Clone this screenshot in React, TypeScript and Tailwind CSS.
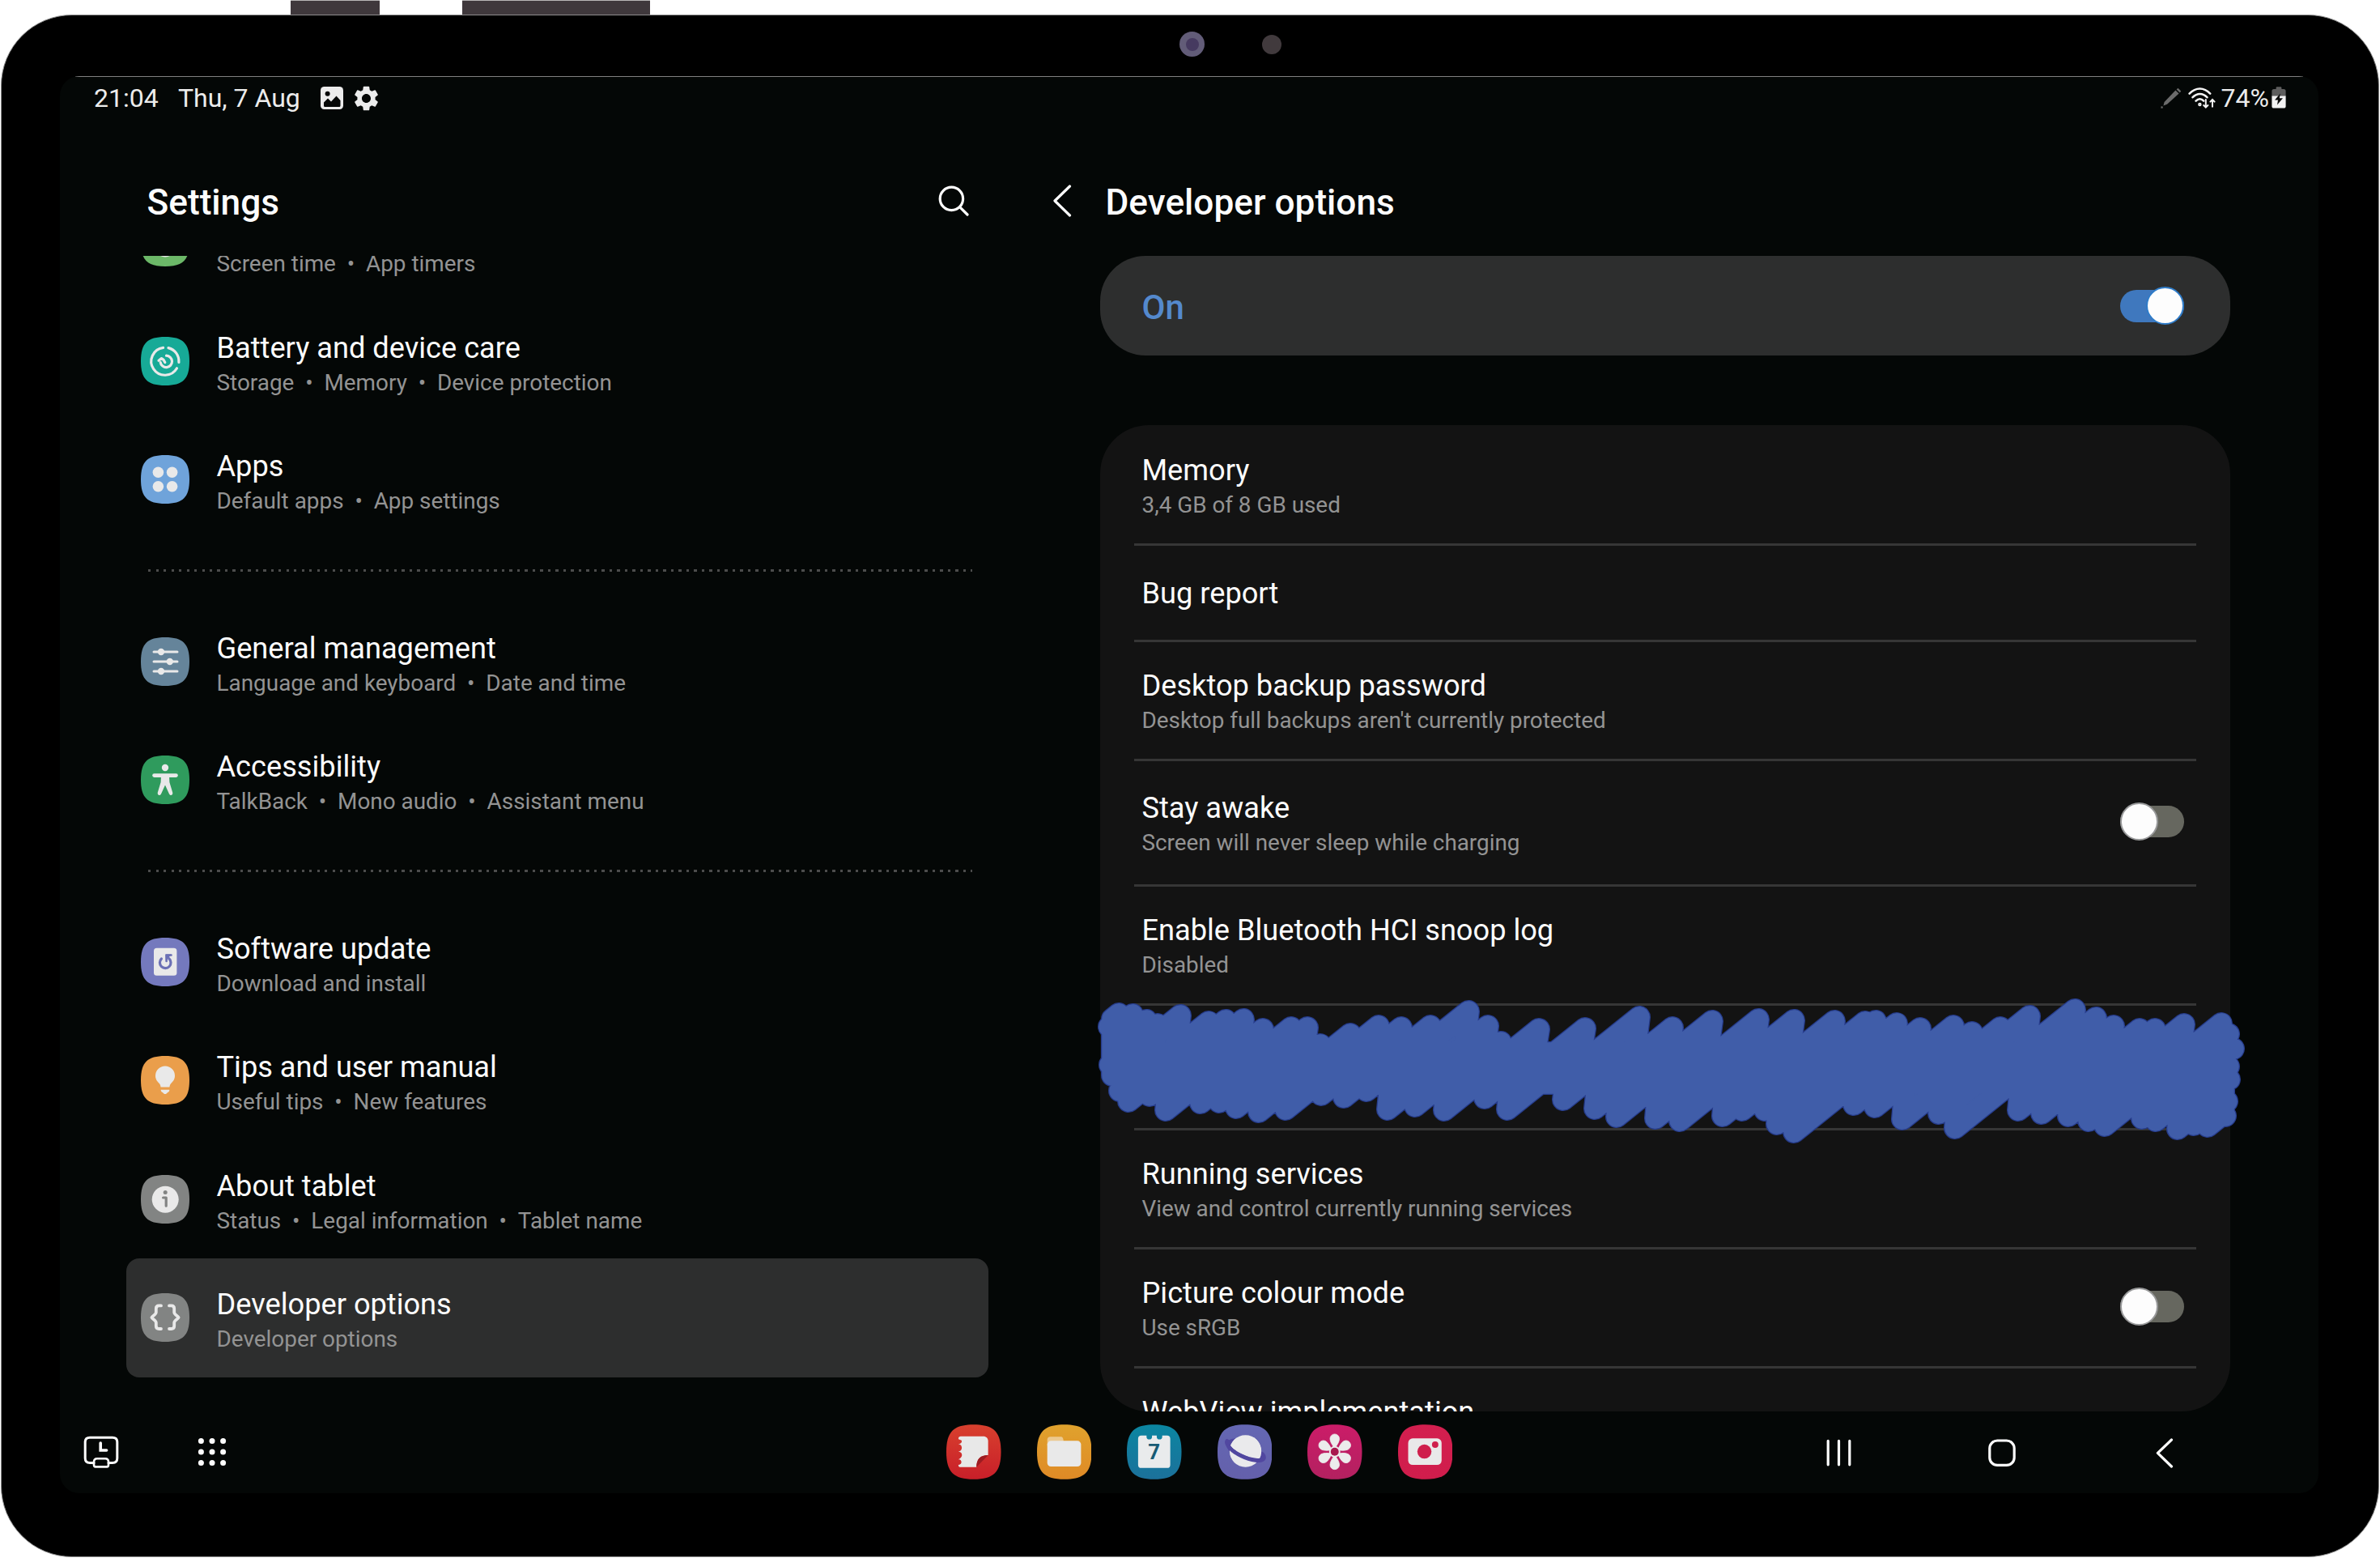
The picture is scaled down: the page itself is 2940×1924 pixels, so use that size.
import type { ReactNode } from "react";
import { MdSettings } from "react-icons/md";

const SQUIRCLE = "M30 0C52 0 60 8 60 30C60 52 52 60 30 60C8 60 0 52 0 30C0 8 8 0 30 0Z";

function ListIcon({ color, children }: { color: string; children?: ReactNode }) {
  return (
    <svg className="h-[60px] w-[60px] shrink-0" viewBox="0 0 60 60" fill="none" strokeLinecap="round" strokeLinejoin="round">
      <path d={SQUIRCLE} fill={color} />
      {children}
    </svg>
  );
}

const INK = "#e9e9e9";

const wellbeingIcon = (
  <ListIcon color="#6cb868">
    <circle cx="30" cy="36" r="12.4" fill={INK} />
  </ListIcon>
);
const batteryIcon = (
  <ListIcon color="#17aa97">
    <path d="M34 13.6A17 17 0 0 1 46.9 31.5M44.5 38.8A17 17 0 1 1 27.6 13.4" stroke={INK} strokeWidth="3.2" />
    <path d="M31.5 23.2A7.2 7.2 0 1 1 24.2 31.5" stroke={INK} strokeWidth="3.2" />
    <path d="M22 29.2L25.5 26.6L28 28.4L29.8 31.5" stroke={INK} strokeWidth="3.2" />
  </ListIcon>
);
const appsIcon = (
  <ListIcon color="#6fa3da">
    <circle cx="21.4" cy="21.2" r="6.8" fill={INK} />
    <circle cx="38.6" cy="21.2" r="6.8" fill={INK} />
    <circle cx="21.4" cy="38.8" r="6.8" fill={INK} />
    <circle cx="38.6" cy="38.8" r="6.8" fill={INK} />
  </ListIcon>
);
const slidersIcon = (
  <ListIcon color="#65849a">
    <path d="M16 18H45M16 30H45M16 42H45" stroke={INK} strokeWidth="3" />
    <circle cx="25" cy="18" r="4.2" fill={INK} />
    <circle cx="35.8" cy="30" r="4.2" fill={INK} />
    <circle cx="25" cy="42" r="4.2" fill={INK} />
  </ListIcon>
);
const accessibilityIcon = (
  <ListIcon color="#2f9b5d">
    <circle cx="30" cy="15" r="4.2" fill={INK} />
    <path d="M16.5 24.6H43.5" stroke={INK} strokeWidth="4.6" />
    <path d="M25 24.5H35L35.4 33L39.3 46C39.6 49.4 36 50 34.9 47.2L30 36.5L25.1 47.2C24 50 20.4 49.4 20.7 46L24.6 33Z" fill={INK} />
  </ListIcon>
);
const updateIcon = (
  <ListIcon color="#7479bd">
    <rect x="16" y="12.8" width="28.4" height="34" rx="3.6" fill={INK} />
    <path d="M25.4 26A6.8 6.8 0 1 0 34.8 25.8" stroke="#6b70b5" strokeWidth="3.2" />
    <path d="M31.5 21.5H37.5M31.6 21.6V29" stroke="#6b70b5" strokeWidth="2.6" />
    <path d="M30.4 20.6H37.6L31 29Z" fill="#6b70b5" />
  </ListIcon>
);
const tipsIcon = (
  <ListIcon color="#ea9e4b">
    <path d="M30 12.4A12 12 0 0 1 42 24.4C42 29 39.4 31.6 37 34.2C35.6 35.8 35.6 38.6 35.2 38.6H24.8C24.4 38.6 24.4 35.8 23 34.2C20.6 31.6 18 29 18 24.4A12 12 0 0 1 30 12.4Z" fill={INK} />
    <path d="M24.6 41.8H35.4C35.2 44.2 34 44.6 32.8 45.2C31.6 47.6 28.4 47.6 27.2 45.2C26 44.6 24.8 44.2 24.6 41.8Z" fill={INK} />
  </ListIcon>
);
const aboutIcon = (
  <ListIcon color="#828483">
    <circle cx="30.2" cy="30.2" r="16.5" fill={INK} />
    <circle cx="30.2" cy="21.6" r="2.5" fill="#828483" />
    <path d="M27.6 28H31.2V38.2" stroke="#828483" strokeWidth="3.2" />
  </ListIcon>
);
const developerIcon = (
  <ListIcon color="#828483">
    <path d="M25 15.4H22.4C20 15.4 18.8 16.8 18.8 19V23.4C18.8 26.6 14 28 13.4 30C14 32 18.8 33.4 18.8 36.6V40.6C18.8 42.8 20 44 22.4 44H25" stroke={INK} strokeWidth="3.8" />
    <path d="M35 15.4H37.6C40 15.4 41.2 16.8 41.2 19V23.4C41.2 26.6 46 28 46.6 30C46 32 41.2 33.4 41.2 36.6V40.6C41.2 42.8 40 44 37.6 44H35" stroke={INK} strokeWidth="3.8" />
  </ListIcon>
);

type Item = { icon: ReactNode; title: string; parts: string[]; selected?: boolean };

const GROUPS: Item[][] = [
  [
    { icon: wellbeingIcon, title: "\u00a0", parts: ["Screen time", "App timers"] },
    { icon: batteryIcon, title: "Battery and device care", parts: ["Storage", "Memory", "Device protection"] },
    { icon: appsIcon, title: "Apps", parts: ["Default apps", "App settings"] },
  ],
  [
    { icon: slidersIcon, title: "General management", parts: ["Language and keyboard", "Date and time"] },
    { icon: accessibilityIcon, title: "Accessibility", parts: ["TalkBack", "Mono audio", "Assistant menu"] },
  ],
  [
    { icon: updateIcon, title: "Software update", parts: ["Download and install"] },
    { icon: tipsIcon, title: "Tips and user manual", parts: ["Useful tips", "New features"] },
    { icon: aboutIcon, title: "About tablet", parts: ["Status", "Legal information", "Tablet name"] },
    { icon: developerIcon, title: "Developer options", parts: ["Developer options"], selected: true },
  ],
];

const SEPARATOR = "\u00a0\u00a0•\u00a0\u00a0";

function NavRow({ item }: { item: Item }) {
  return (
    <div className={"flex h-[146.5px] items-center gap-[33.5px] rounded-[16px] px-[18px] " + (item.selected ? "bg-[#2d2e2e]" : "")}>
      {item.icon}
      <div className="whitespace-nowrap pt-[10px]">
        <div className="text-[36.2px] leading-[44px] text-[#fdfdfd]">{item.title}</div>
        <div className="text-[27.9px] leading-[42px] text-[#939393]">{item.parts.join(SEPARATOR)}</div>
      </div>
    </div>
  );
}

function Toggle({ on }: { on?: boolean }) {
  return on ? (
    <div className="flex h-[40px] w-[79px] items-center justify-end rounded-full bg-[#3f78be]">
      <div className="h-[47px] w-[47px] shrink-0 rounded-full border-2 border-[#2f7cc9] bg-[#fdfdfd]" />
    </div>
  ) : (
    <div className="mb-[2px] flex h-[39px] w-[79px] items-center rounded-full bg-[#66675f]">
      <div className="h-[47px] w-[47px] shrink-0 rounded-full border-2 border-[#98999a] bg-[#fdfdfd]" />
    </div>
  );
}

function OptionRow({ height, title, sub, toggle, first }: { height: string; title?: string; sub?: string; toggle?: boolean; first?: boolean }) {
  return (
    <div className={"mx-[42px] flex shrink-0 items-center justify-between border-b-[3px] border-[#363636] pl-[9.5px] pr-[15px] " + height}>
      <div className={"whitespace-nowrap " + (first ? "pt-[9px]" : sub ? "pt-[7px]" : "pt-[2px]")}>
        <div className="text-[36.2px] leading-[44px] text-[#fdfdfd]">{title}</div>
        {sub && <div className="text-[27.85px] leading-[42px] text-[#939393]">{sub}</div>}
      </div>
      {toggle && <Toggle />}
    </div>
  );
}

// Cap centres of the marker strokes: upper edge, lower edge and both ends.
const UPPER: [number, number][] = [
  [42, 32], [59, 33], [76, 40], [90, 45], [118, 34], [153, 42], [174, 40], [196, 39], [220, 51], [255, 49], [275, 49],
  [291, 70], [328, 57], [363, 47], [391, 49], [427, 47], [474, 29], [498, 47], [514, 67], [561, 51], [618, 50], [685, 36],
  [726, 49], [775, 41], [832, 39], [876, 40], [926, 41], [964, 42], [977, 41], [1003, 44], [1032, 50], [1073, 47],
  [1096, 55], [1131, 49], [1167, 35], [1223, 27], [1249, 37], [1271, 47], [1303, 51], [1322, 51], [1358, 45], [1404, 44],
];
const LOWER: [number, number][] = [
  [54, 140], [80, 133], [100, 151], [143, 142], [166, 141], [187, 148], [215, 153], [248, 150], [292, 132], [320, 135],
  [348, 127], [374, 150], [408, 146], [444, 151], [494, 136], [522, 150], [591, 138], [630, 149], [657, 159], [705, 161],
  [735, 164], [788, 158], [812, 151], [840, 151], [855, 168], [876, 178], [950, 144], [976, 147], [1010, 162], [1055, 155],
  [1075, 173], [1153, 151], [1182, 155], [1215, 158], [1240, 164], [1260, 170], [1306, 161], [1323, 164], [1350, 174],
  [1370, 169], [1387, 171],
];
const SIDES: [number, number][] = [
  [30, 48], [31, 95], [43, 127], [1413, 57], [1419, 75], [1413, 97], [1414, 113], [1411, 140], [1409, 158],
];
const SCRIBBLE = [
  ...UPPER.map(([x, y]) => {
    const run = Math.min(60, x - 34);
    return `M${x} ${y}L${x - run} ${y + run * 0.8}V108H${Math.max(x - 9, 36)}Z`;
  }),
  ...LOWER.map(([x, y]) => {
    const run = Math.min(62, 1407 - x);
    return `M${x} ${y}L${x + run} ${y - run * 0.8}V92H${Math.min(x + 6, 1407)}Z`;
  }),
  ...SIDES.map(([x, y]) => `M${x} ${y}L${x < 700 ? x + 40 : x - 40} ${x < 700 ? y : y + (100 - y) * 0.3}`),
  "M46 80H1400V118H46Z",
].join("");

function Scribble() {
  return (
    <svg className="pointer-events-none absolute left-[55px] top-[904px] h-[210px] w-[1450px]" viewBox="0 0 1450 210" strokeLinecap="round" strokeLinejoin="round">
      <path d={SCRIBBLE} fill="none" stroke="#263c8c" strokeWidth="28" />
      <path d={SCRIBBLE} fill="#405da9" stroke="#405da9" strokeWidth="25.5" />
    </svg>
  );
}

function DockIcon({ id, from, to, children }: { id: string; from: string; to: string; children: ReactNode }) {
  return (
    <svg className="h-[68px] w-[68px]" viewBox="0 0 68 68" fill="none">
      <defs>
        <linearGradient id={id} x1="0" y1="0" x2="0" y2="1">
          <stop offset="0" stopColor={from} />
          <stop offset="1" stopColor={to} />
        </linearGradient>
      </defs>
      <path d="M34 0C59 0 68 9 68 34C68 59 59 68 34 68C9 68 0 59 0 34C0 9 9 0 34 0Z" fill={`url(#${id})`} />
      {children}
    </svg>
  );
}

function Dock() {
  return (
    <div className="flex items-center gap-[44px] pb-[2px]">
      <DockIcon id="notes" from="#d8402e" to="#c81f29">
        <path d="M18 14.5H46C49.6 14.5 52 16.8 52 20.4V38C42 38 37.5 43 37.5 53H18C16 53 15 52 15 50.6C15 49.6 17.4 50 18.4 48C19.4 46 18 43 15 43.4C17.6 42 19.6 40 19.4 37.6C19.2 35 17.4 34 15 33.8C18 32.8 19.4 31 19.2 28.4C19 26 17.4 24.4 15 24.4C17.4 23.6 19.4 22.6 19.2 20.6C19 18.6 15 19 15 17.4C15 15.6 16.2 14.5 18 14.5Z" fill="#e8e8e8" />
        <path d="M52 38L37.5 53C37.5 43 42 38 52 38Z" fill="#9c1c22" />
      </DockIcon>
      <DockIcon id="files" from="#e0a22d" to="#df8a26">
        <path d="M12.8 19C12.8 16.4 14.2 15 16.6 15H29.6C32 15 32.8 17 33 20.5V26H12.8Z" fill="#ecc98f" />
        <rect x="12.8" y="20.2" width="42" height="32" rx="4.6" fill="#e9e9e9" />
      </DockIcon>
      <DockIcon id="calendar" from="#0b86a1" to="#1c719b">
        <path d="M18 13.6H24.5V15A3.4 3.4 0 0 0 31.3 15V13.6H37.2V15A3.4 3.4 0 0 0 44 15V13.6H50C52.6 13.6 54 15 54 17.6V50C54 52.6 52.6 54 50 54H18C15.4 54 14 52.6 14 50V17.6C14 15 15.4 13.6 18 13.6Z" fill="#e9ebec" />
        <text x="34" y="43.4" textAnchor="middle" fontSize="26" fontWeight="700" fill="#175b74" fontFamily="Roboto, sans-serif">7</text>
      </DockIcon>
      <DockIcon id="internet" from="#6467b3" to="#6460ab">
        <ellipse cx="34.5" cy="32.5" rx="22.5" ry="9.5" transform="rotate(24 34.5 32.5)" stroke="#5147a0" strokeWidth="5" />
        <circle cx="34.8" cy="33" r="19.8" fill="#eaeaec" />
        <path d="M12 20.5C10 24 17 33 29 38.5C42 45 55.5 46.5 57.5 42C58 40.6 57.6 38.8 56 37" stroke="#5147a0" strokeWidth="5" strokeLinecap="round" />
        <clipPath id="planet">
          <circle cx="34.8" cy="33" r="19.8" />
        </clipPath>
        <path d="M15 20C13.6 24 19 31 30 36C42 41.6 53 42.8 54.5 38.5C56 30 52 20 45 15.5L22 17Z" fill="#eaeaec" clipPath="url(#planet)" />
      </DockIcon>
      <DockIcon id="gallery" from="#cb1c68" to="#b32160">
        {[0, 60, 120, 180, 240, 300].map((a) => (
          <path key={a} d="M34 29.5C30.6 25 28.2 21 28.2 17.6A5.8 5.8 0 0 1 39.8 17.6C39.8 21 37.4 25 34 29.5Z" transform={`rotate(${a} 34 33.8)`} fill="#ececec" stroke="#ececec" strokeWidth="0.8" />
        ))}
        <circle cx="34" cy="33.8" r="7" fill="#ececec" />
        <circle cx="34" cy="33.8" r="5" fill="#a8194f" />
      </DockIcon>
      <DockIcon id="camera" from="#d31f4f" to="#d01d4c">
        <rect x="12.6" y="17.2" width="41.6" height="33" rx="5.6" fill="#e9e9e9" />
        <circle cx="32.8" cy="33.6" r="8.8" fill="#cf1f4c" />
        <circle cx="46.2" cy="25" r="4" fill="#cf1f4c" />
      </DockIcon>
    </div>
  );
}

function StatusBar() {
  return (
    <div className="flex h-[50px] items-center justify-between pl-[42px] pr-[40px] text-[32px] leading-[49px] text-[#ececec]">
      <div className="flex items-center">
        <span className="w-[104px]">21:04</span>
        <span className="w-[176px]">Thu, 7 Aug</span>
        <svg className="h-[28px] w-[28px]" viewBox="0 0 28 28">
          <rect width="28" height="28" rx="4.5" fill="#ececec" />
          <path d="M4 23.5V19.5L9 14.5L13 18.5L19.5 11.5L24.5 17V23.5C24.5 24.4 24 25 23 25H5.4C4.5 25 4 24.4 4 23.5Z" fill="#050706" />
          <circle cx="8.6" cy="8.8" r="3" fill="#050706" />
        </svg>
        <MdSettings className="ml-[10px] h-[37px] w-[37px]" />
      </div>
      <div className="flex items-center">
        <svg className="h-[26px] w-[26px]" viewBox="0 0 26 26" fill="#6b6b6b">
          <path d="M18.4 3.6L22.6 7.6L8 20.8L3.4 22.6L4.6 18Z" />
          <path d="M19.6 2.4L21.4 0.8L25.2 4.6L23.8 6.4Z" />
          <path d="M0.6 23.2L2.6 23.4L2.8 25.4L0.4 25.8Z" />
        </svg>
        <svg className="ml-[8px] h-[28px] w-[34px]" viewBox="0 0 34 28" fill="none" stroke="#f4f4f4" strokeWidth="2.6" strokeLinecap="round">
          <path d="M1.6 8.6C9.4 0.4 19.6 0.4 27.2 8.6M5.6 13.2C11 7.6 18.2 7.6 23.4 13.2M9.6 17.6C12.8 14.4 16.2 14.4 19.2 17.6" />
          <circle cx="14.4" cy="22" r="0.9" />
          <path d="M21.8 16V25.4M19.2 23L21.8 25.6L24.4 23M30 24.8V16.4M27.4 18.6L30 16L32.6 18.6" strokeWidth="2" />
        </svg>
        <span className="ml-[7px]">74%</span>
        <svg className="ml-[3px] h-[28px] w-[18px]" viewBox="0 0 18 28">
          <path d="M5.6 1.6C5.6 0.6 6.2 0.2 7 0.2H11C11.8 0.2 12.4 0.6 12.4 1.6V3H15C16.8 3 17.6 4 17.6 5.6V12H0.4V5.6C0.4 4 1.2 3 3 3H5.6Z" fill="#5d5d5d" />
          <path d="M0.4 11.4H17.6V24C17.6 25.8 16.8 26.6 15 26.6H3C1.2 26.6 0.4 25.8 0.4 24Z" fill="#f2f2f2" />
          <path d="M10.8 8.4L4 16.6H8L7 22.6L14 14.2H9.8Z" fill="#0b0b0b" />
        </svg>
      </div>
    </div>
  );
}

export default function App() {
  return (
    <div className="flex h-[1924px] w-[2940px] flex-col overflow-hidden bg-white font-['Roboto',sans-serif]">
      <div className="flex h-[18px] shrink-0 pl-[359px]">
        <div className="w-[110px] border-t border-[#b9b7b7] bg-[#3f383c]" />
        <div className="ml-[102px] w-[232px] border-t border-[#b9b7b7] bg-[#3f383c]" />
      </div>
      <div className="mx-px flex h-[1905px] shrink-0 flex-col rounded-[88px] border border-[#8d8d8d] bg-black">
        <div className="flex h-[75px] shrink-0 items-center pb-[4px] pl-[1455px]">
          <div className="flex h-[31px] w-[31px] items-center justify-center rounded-full bg-[#625c78]">
            <div className="h-[16px] w-[16px] rounded-full bg-[#463a60]" />
          </div>
          <div className="ml-[71px] h-[24px] w-[24px] rounded-full bg-[#413a3d]" />
        </div>
        <div className="ml-[72px] flex h-[1750px] w-[2790px] flex-col overflow-hidden rounded-[24px] bg-[#040706]">
          <div className="mx-[19px] h-px shrink-0 bg-[#808080]" />
          <div className="h-px shrink-0" />
          <StatusBar />
          <div className="flex h-[1597px] shrink-0">
            <div className="flex w-[1211px] flex-col pl-[82px]">
              <div className="flex h-[170px] shrink-0 items-center justify-between pl-[25.5px] pr-[87px] pt-[38px]">
                <div className="text-[44.2px] font-medium leading-[60px] text-[#fdfdfd]">Settings</div>
                <svg className="mb-[5px] h-[40px] w-[40px]" viewBox="0 0 40 40" fill="none" stroke="#fdfdfd" strokeWidth="3.2" strokeLinecap="round">
                  <circle cx="17.4" cy="17.4" r="14.2" />
                  <path d="M27.8 27.8L37 37" />
                </svg>
              </div>
              <div className="flex-1 overflow-hidden">
                <div className="mt-[-90px] w-[1065px]">
                  {GROUPS.map((group, i) => (
                    <div key={i}>
                      {i > 0 && (
                        <div className="flex h-[78px] items-center pl-[27px]">
                          <div className="h-[3px] w-[1018px] bg-[repeating-linear-gradient(90deg,#4c4c4c_0_3px,transparent_3px_9.5px)]" />
                        </div>
                      )}
                      {group.map((item) => (
                        <NavRow key={item.title} item={item} />
                      ))}
                    </div>
                  ))}
                </div>
              </div>
            </div>
            <div className="flex w-[1579px] flex-col">
              <div className="flex h-[170px] shrink-0 items-center pl-[14px] pt-[38px]">
                <svg className="mb-[4px] h-[42px] w-[26px]" viewBox="0 0 26 42" fill="none" stroke="#fdfdfd" strokeWidth="3.2" strokeLinecap="round" strokeLinejoin="round">
                  <path d="M22.5 3L4 21L22.5 39" />
                </svg>
                <div className="ml-[40.5px] text-[44.2px] font-medium leading-[60px] text-[#fdfdfd]">Developer options</div>
              </div>
              <div className="relative ml-[74px] flex w-[1396px] flex-1 flex-col">
                <div className="flex h-[123px] shrink-0 items-center justify-between rounded-[56px] bg-[#2d2e2e] pl-[51.5px] pr-[57px]">
                  <span className="pt-[4px] text-[42px] font-medium leading-[50px] text-[#5489cd]">On</span>
                  <Toggle on />
                </div>
                <div className="mt-[86px] flex h-[1218px] shrink-0 flex-col overflow-hidden rounded-[60px] bg-[#131313]">
                  <OptionRow height="h-[148.5px]" title="Memory" sub="3,4 GB of 8 GB used" first />
                  <OptionRow height="h-[119px]" title="Bug report" />
                  <OptionRow height="h-[147.5px]" title="Desktop backup password" sub="Desktop full backups aren't currently protected" />
                  <OptionRow height="h-[154.5px]" title="Stay awake" sub="Screen will never sleep while charging" toggle />
                  <OptionRow height="h-[147.5px]" title="Enable Bluetooth HCI snoop log" sub="Disabled" />
                  <OptionRow height="h-[153.5px]" />
                  <OptionRow height="h-[147px]" title="Running services" sub="View and control currently running services" />
                  <OptionRow height="h-[147px]" title="Picture colour mode" sub="Use sRGB" toggle />
                  <OptionRow height="h-[147px]" title="WebView implementation" sub={"\u00a0"} />
                </div>
                <div className="absolute left-[-74px] top-0">
                  <Scribble />
                </div>
              </div>
            </div>
          </div>
          <div className="grid h-[101px] shrink-0 grid-cols-[1095px_625px_1fr] items-center">
            <div className="flex items-center pb-[1px] pl-[28.5px]">
              <svg className="h-[40px] w-[44px]" viewBox="0 0 44 40" fill="none" stroke="#fdfdfd" strokeWidth="3" strokeLinejoin="round" strokeLinecap="round">
                <path d="M13 33.6H8C4.4 33.6 2.2 31.4 2.2 27.8V8C2.2 4.4 4.4 2.2 8 2.2H36C39.6 2.2 41.8 4.4 41.8 8V27.8C41.8 31.4 39.6 33.6 36 33.6H31" />
                <path d="M17 28.2H27C29.6 28.2 31 30 31 32.4V36C31 37.6 30.4 38.4 29 38.4H15C13.6 38.4 13 37.6 13 36V32.4C13 30 14.4 28.2 17 28.2Z" strokeWidth="2.6" />
                <path d="M21.2 9V18H28.6" strokeWidth="3.6" strokeLinejoin="miter" />
              </svg>
              <svg className="ml-[97px] h-[36px] w-[36px]" viewBox="0 0 36 36" fill="#fdfdfd">
                {[4.4, 18, 31.6].map((y) => [4.4, 18, 31.6].map((x) => <circle key={`${x}-${y}`} cx={x} cy={y} r="3.5" />))}
              </svg>
            </div>
            <Dock />
            <div className="flex items-center pl-[460px]">
              <svg className="h-[36px] w-[36px]" viewBox="0 0 36 36" stroke="#fdfdfd" strokeWidth="3.2" strokeLinecap="round">
                <path d="M4.2 3.4V32.8M17.5 3.4V32.8M30.8 3.4V32.8" />
              </svg>
              <svg className="ml-[163.5px] h-[38px] w-[38px]" viewBox="0 0 38 38" fill="none" stroke="#fdfdfd" strokeWidth="3.2">
                <rect x="3.8" y="4" width="30.4" height="30.4" rx="9.5" />
              </svg>
              <svg className="ml-[169.5px] h-[40px] w-[26px]" viewBox="0 0 26 40" fill="none" stroke="#fdfdfd" strokeWidth="3.2" strokeLinecap="round" strokeLinejoin="round">
                <path d="M21.5 4L4.4 20.4L21.5 37" />
              </svg>
            </div>
          </div>
        </div>
      </div>
    </div>
  );
}
